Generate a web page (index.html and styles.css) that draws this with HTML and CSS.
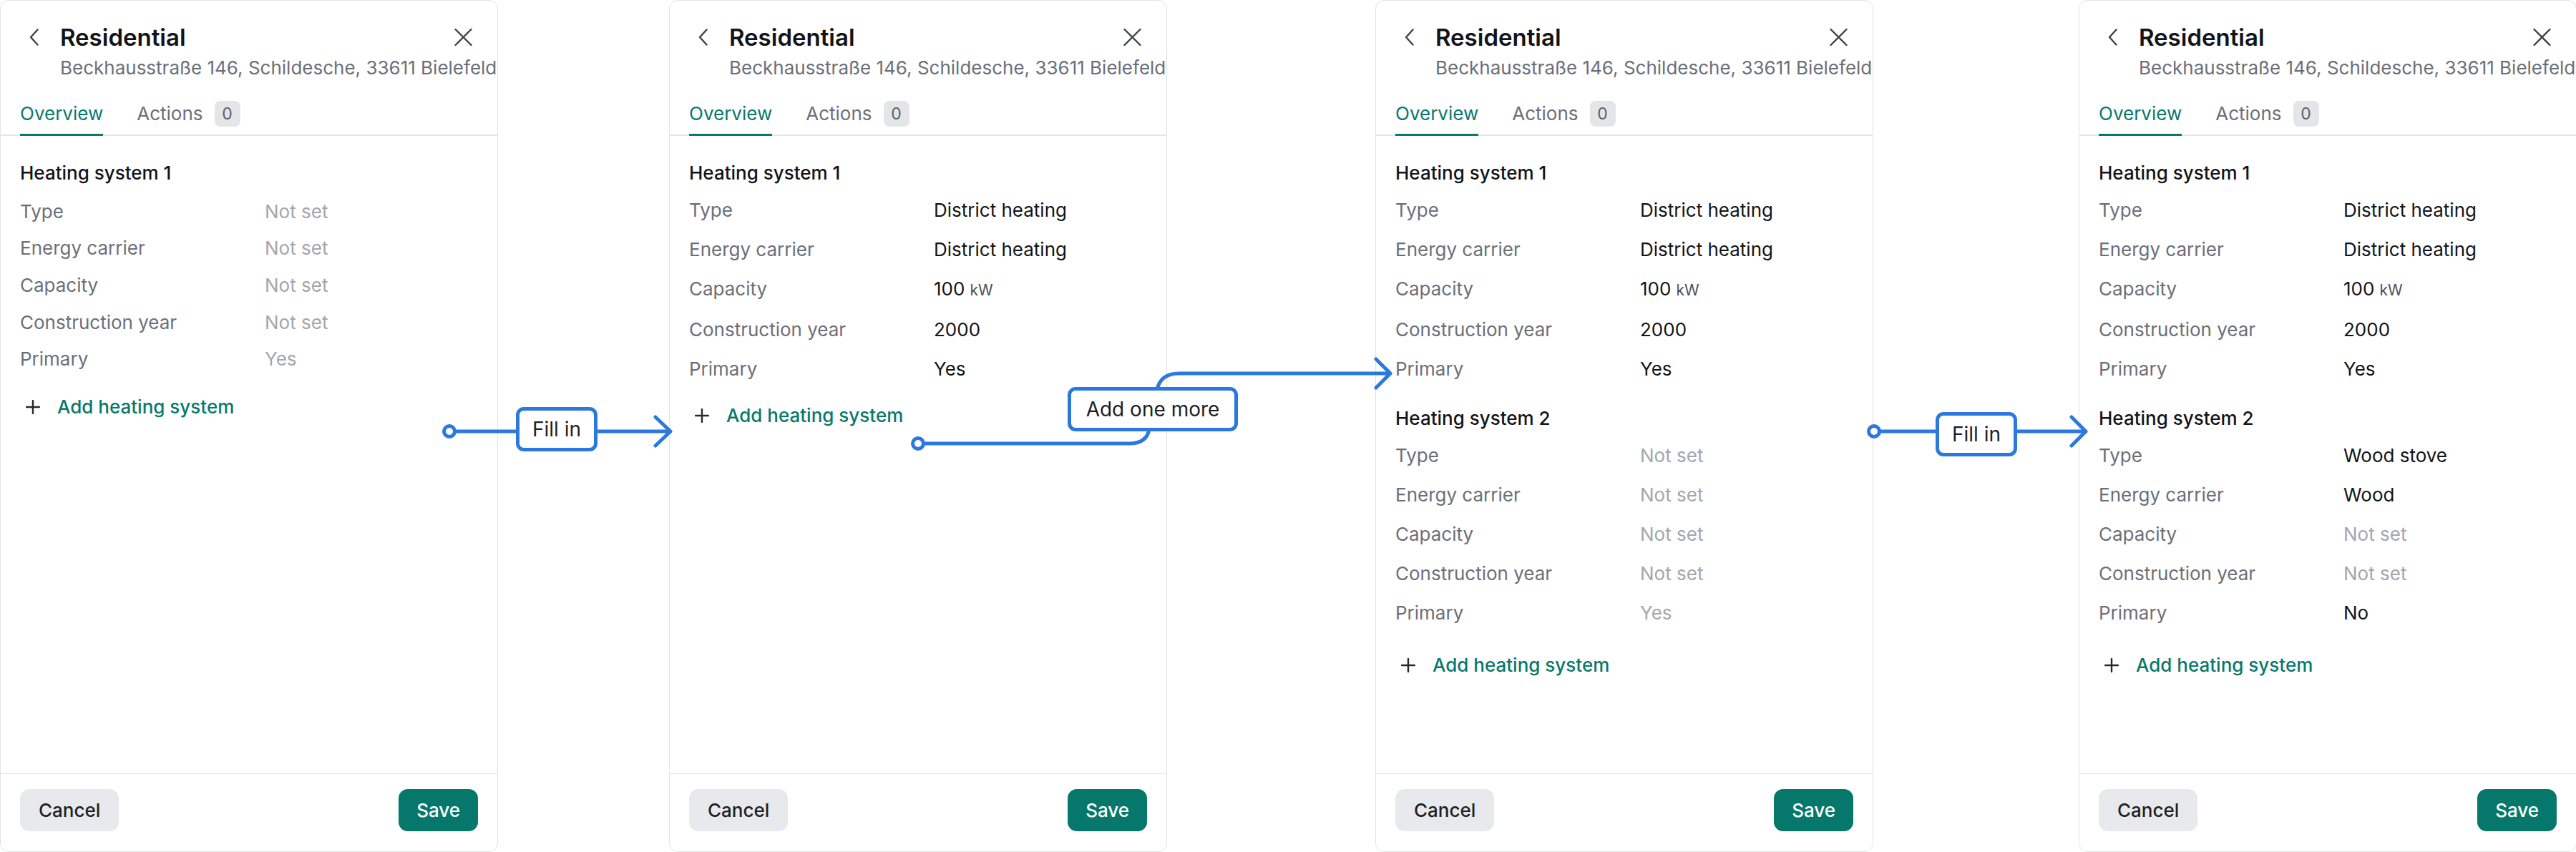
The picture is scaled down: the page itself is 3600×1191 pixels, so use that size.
FILE: index.html
```html
<!DOCTYPE html>
<html>
<head>
<meta name="viewport" content="width=device-width, initial-scale=1.0">
<link rel="stylesheet" href="styles.css">
</head>
<body>

<div class="board">

  <!-- step 1: empty heating system -->
  <section class="panel panel--blank">
    <div class="head">
      <svg class="back" viewBox="0 0 16 24"><path d="M12.5 1.5 3 12l9.5 10.5"/></svg>
      <h1 class="title">Residential</h1>
      <svg class="close" viewBox="0 0 25 24"><path d="M1.5 1 23.5 23M23.5 1 1.5 23"/></svg>
    </div>
    <p class="address">Beckhausstraße 146, Schildesche, 33611 Bielefeld</p>
    <div class="tabs">
      <a class="tab active">Overview</a>
      <a class="tab">Actions <span class="badge">0</span></a>
    </div>
    <div class="content">
      <div class="system">
        <h2>Heating system 1</h2>
        <div class="row"><span class="label">Type</span><span class="value empty">Not set</span></div>
        <div class="row"><span class="label">Energy carrier</span><span class="value empty">Not set</span></div>
        <div class="row"><span class="label">Capacity</span><span class="value empty">Not set</span></div>
        <div class="row"><span class="label">Construction year</span><span class="value empty">Not set</span></div>
        <div class="row"><span class="label">Primary</span><span class="value empty">Yes</span></div>
      </div>
      <a class="add"><svg viewBox="0 0 20 20"><path d="M10 1v18M1 10h18"/></svg>Add heating system</a>
    </div>
    <div class="footer">
      <button class="btn">Cancel</button>
      <button class="btn primary">Save</button>
    </div>
  </section>

  <!-- step 2: filled in -->
  <section class="panel panel--second">
    <div class="head">
      <svg class="back" viewBox="0 0 16 24"><path d="M12.5 1.5 3 12l9.5 10.5"/></svg>
      <h1 class="title">Residential</h1>
      <svg class="close" viewBox="0 0 25 24"><path d="M1.5 1 23.5 23M23.5 1 1.5 23"/></svg>
    </div>
    <p class="address">Beckhausstraße 146, Schildesche, 33611 Bielefeld</p>
    <div class="tabs">
      <a class="tab active">Overview</a>
      <a class="tab">Actions <span class="badge">0</span></a>
    </div>
    <div class="content">
      <div class="system">
        <h2>Heating system 1</h2>
        <div class="row"><span class="label">Type</span><span class="value">District heating</span></div>
        <div class="row"><span class="label">Energy carrier</span><span class="value">District heating</span></div>
        <div class="row"><span class="label">Capacity</span><span class="value">100<span class="unit">kW</span></span></div>
        <div class="row"><span class="label">Construction year</span><span class="value">2000</span></div>
        <div class="row"><span class="label">Primary</span><span class="value">Yes</span></div>
      </div>
      <a class="add"><svg viewBox="0 0 20 20"><path d="M10 1v18M1 10h18"/></svg>Add heating system</a>
    </div>
    <div class="footer">
      <button class="btn">Cancel</button>
      <button class="btn primary">Save</button>
    </div>
  </section>

  <!-- step 3: second system added -->
  <section class="panel panel--third">
    <div class="head">
      <svg class="back" viewBox="0 0 16 24"><path d="M12.5 1.5 3 12l9.5 10.5"/></svg>
      <h1 class="title">Residential</h1>
      <svg class="close" viewBox="0 0 25 24"><path d="M1.5 1 23.5 23M23.5 1 1.5 23"/></svg>
    </div>
    <p class="address">Beckhausstraße 146, Schildesche, 33611 Bielefeld</p>
    <div class="tabs">
      <a class="tab active">Overview</a>
      <a class="tab">Actions <span class="badge">0</span></a>
    </div>
    <div class="content">
      <div class="system">
        <h2>Heating system 1</h2>
        <div class="row"><span class="label">Type</span><span class="value">District heating</span></div>
        <div class="row"><span class="label">Energy carrier</span><span class="value">District heating</span></div>
        <div class="row"><span class="label">Capacity</span><span class="value">100<span class="unit">kW</span></span></div>
        <div class="row"><span class="label">Construction year</span><span class="value">2000</span></div>
        <div class="row"><span class="label">Primary</span><span class="value">Yes</span></div>
      </div>
      <div class="system">
        <h2>Heating system 2</h2>
        <div class="row"><span class="label">Type</span><span class="value empty">Not set</span></div>
        <div class="row"><span class="label">Energy carrier</span><span class="value empty">Not set</span></div>
        <div class="row"><span class="label">Capacity</span><span class="value empty">Not set</span></div>
        <div class="row"><span class="label">Construction year</span><span class="value empty">Not set</span></div>
        <div class="row"><span class="label">Primary</span><span class="value empty">Yes</span></div>
      </div>
      <a class="add"><svg viewBox="0 0 20 20"><path d="M10 1v18M1 10h18"/></svg>Add heating system</a>
    </div>
    <div class="footer">
      <button class="btn">Cancel</button>
      <button class="btn primary">Save</button>
    </div>
  </section>

  <!-- step 4: second system filled in -->
  <section class="panel panel--fourth">
    <div class="head">
      <svg class="back" viewBox="0 0 16 24"><path d="M12.5 1.5 3 12l9.5 10.5"/></svg>
      <h1 class="title">Residential</h1>
      <svg class="close" viewBox="0 0 25 24"><path d="M1.5 1 23.5 23M23.5 1 1.5 23"/></svg>
    </div>
    <p class="address">Beckhausstraße 146, Schildesche, 33611 Bielefeld</p>
    <div class="tabs">
      <a class="tab active">Overview</a>
      <a class="tab">Actions <span class="badge">0</span></a>
    </div>
    <div class="content">
      <div class="system">
        <h2>Heating system 1</h2>
        <div class="row"><span class="label">Type</span><span class="value">District heating</span></div>
        <div class="row"><span class="label">Energy carrier</span><span class="value">District heating</span></div>
        <div class="row"><span class="label">Capacity</span><span class="value">100<span class="unit">kW</span></span></div>
        <div class="row"><span class="label">Construction year</span><span class="value">2000</span></div>
        <div class="row"><span class="label">Primary</span><span class="value">Yes</span></div>
      </div>
      <div class="system">
        <h2>Heating system 2</h2>
        <div class="row"><span class="label">Type</span><span class="value">Wood stove</span></div>
        <div class="row"><span class="label">Energy carrier</span><span class="value">Wood</span></div>
        <div class="row"><span class="label">Capacity</span><span class="value empty">Not set</span></div>
        <div class="row"><span class="label">Construction year</span><span class="value empty">Not set</span></div>
        <div class="row"><span class="label">Primary</span><span class="value">No</span></div>
      </div>
      <a class="add"><svg viewBox="0 0 20 20"><path d="M10 1v18M1 10h18"/></svg>Add heating system</a>
    </div>
    <div class="footer">
      <button class="btn">Cancel</button>
      <button class="btn primary">Save</button>
    </div>
  </section>

</div>

<!-- flow arrows drawn over the panels -->
<div class="flow">
  <svg class="flow-lines" width="3600" height="1191" viewBox="0 0 3600 1191">
    <path d="M636 603H937M916 583l21 20-21 20"/>
    <circle cx="628" cy="603" r="7.5"/>
    <path d="M1291 620H1578C1596 620 1604 612 1606 600L1617 545C1620 530 1630 522 1648 522H1943M1923 502l20 20-20 20"/>
    <circle cx="1283" cy="620" r="7.5"/>
    <path d="M2627 603H2915M2895 583l20 20-20 20"/>
    <circle cx="2619" cy="603" r="7.5"/>
  </svg>
  <div class="tag tag--fill-a">Fill in</div>
  <div class="tag tag--more">Add one more</div>
  <div class="tag tag--fill-b">Fill in</div>
</div>

</body>
</html>
```

FILE: styles.css
```css
body {
  margin: 0;
  font-family: "Inter", "Liberation Sans", sans-serif;
  color: #16181d;
  background: #fff;
  position: relative;
  width: 3600px;
  height: 1191px;
  overflow: hidden;
}

.board {
  display: flex;
  height: 1191px;
}

.panel {
  width: 696px;
  height: 1191px;
  flex: none;
  box-sizing: border-box;
  border: 1px solid #e2e3e7;
  border-radius: 12px;
  background: #fff;
  display: flex;
  flex-direction: column;
}

.panel--second { margin-left: 239px; }
.panel--third { margin-left: 291px; }
.panel--fourth { margin-left: 287px; }

/* header */
.head {
  display: flex;
  align-items: center;
  padding: 31px 35px 0 39px;
}

.back {
  width: 16px;
  height: 24px;
  margin-right: 28px;
  fill: none;
  stroke: #3d4046;
  stroke-width: 2.4;
  stroke-linecap: round;
  stroke-linejoin: round;
}

.title {
  flex: 1;
  margin: 0;
  font-size: 33px;
  line-height: 40px;
  font-weight: 600;
  color: #121418;
}

.close {
  width: 25px;
  height: 24px;
  fill: none;
  stroke: #3d4046;
  stroke-width: 2.4;
  stroke-linecap: round;
}

.address {
  margin: 6px 0 0;
  padding-left: 83px;
  font-size: 26px;
  line-height: 34px;
  color: #6b6f78;
  white-space: nowrap;
}

/* tabs */
.tabs {
  display: flex;
  gap: 47px;
  margin-top: 29px;
  padding: 0 27px;
  border-bottom: 2px solid #e4e5e9;
}

.tab {
  display: flex;
  align-items: center;
  gap: 16px;
  font-size: 26px;
  line-height: 36px;
  color: #6b6f78;
  padding-bottom: 10px;
  border-bottom: 3px solid transparent;
  margin-bottom: -2px;
}

.tab.active {
  color: #08796b;
  border-bottom-color: #08796b;
}

.badge {
  width: 36px;
  height: 36px;
  border-radius: 8px;
  background: #e4e5e9;
  color: #5a5e66;
  font-size: 23px;
  line-height: 36px;
  text-align: center;
}

/* content */
.content {
  padding: 34px 27px 0;
}

.system + .system {
  margin-top: 24px;
}

.system h2 {
  margin: 0 0 6px;
  font-size: 26px;
  line-height: 36px;
  font-weight: 500;
  color: #121418;
}

.row {
  display: flex;
  padding: 9.5px 0;
  font-size: 26px;
  line-height: 36px;
}

.panel--blank .system h2 {
  margin-bottom: 10px;
}

.panel--blank .row {
  padding: 7.8px 0;
}

.label {
  width: 342px;
  flex: none;
  color: #6b6f78;
}

.value {
  color: #121418;
}

.value.empty {
  color: #a3a6ad;
}

.unit {
  margin-left: 7px;
  font-size: 21px;
  color: #4b4f57;
}

.add {
  display: flex;
  align-items: center;
  margin-top: 20px;
  font-size: 26px;
  line-height: 36px;
  font-weight: 500;
  color: #08796b;
}

.panel--blank .add {
  margin-top: 23px;
}

.system + .system + .add {
  margin-top: 28px;
}

.add svg {
  width: 20px;
  height: 20px;
  margin: 0 24px 0 8px;
  fill: none;
  stroke: #26292f;
  stroke-width: 2.4;
  stroke-linecap: round;
}

/* footer */
.footer {
  margin-top: auto;
  display: flex;
  justify-content: space-between;
  padding: 21px 27px 28px 27px;
  border-top: 1px solid #e2e3e7;
}

.btn {
  height: 59px;
  padding: 0 26px;
  border: 0;
  border-radius: 13px;
  font-family: inherit;
  font-size: 26px;
  font-weight: 500;
  background: #e8e9ec;
  color: #1d1f24;
}

.btn.primary {
  padding: 0 25px;
  background: #06786b;
  color: #fff;
}

/* flow overlay */
.flow {
  position: absolute;
  left: 0;
  top: 0;
  width: 3600px;
  height: 1191px;
  pointer-events: none;
}

.flow-lines {
  display: block;
  fill: none;
  stroke: #2b79de;
  stroke-width: 5;
  stroke-linecap: round;
  stroke-linejoin: round;
}

.flow-lines circle {
  fill: #fff;
}

.tag {
  position: absolute;
  box-sizing: border-box;
  height: 62px;
  border: 5px solid #2b79de;
  border-radius: 11px;
  background: #fff;
  font-size: 28px;
  line-height: 52px;
  text-align: center;
  color: #1d1f24;
}

.tag--fill-a { left: 721px; top: 569px; width: 114px; }
.tag--more { left: 1492px; top: 541px; width: 238px; }
.tag--fill-b { left: 2705px; top: 576px; width: 114px; }
```
